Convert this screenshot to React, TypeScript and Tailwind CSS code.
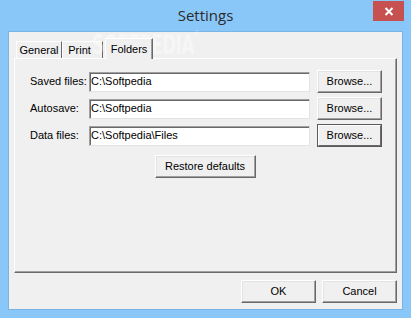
import { ReactNode } from "react";

const raised =
  "border border-t-white border-l-white border-r-[#696969] border-b-[#696969] shadow-[inset_-1px_-1px_0_#a0a0a0,inset_1px_1px_0_#e3e3e3] bg-[#f0f0f0]";

function WinButton({ children, width, isDefault }: { children: ReactNode; width: string; isDefault?: boolean }) {
  if (isDefault) {
    return (
      <div className={`h-[23px] border border-[#5a5a5a] ${width}`}>
        <div className="h-full w-full border border-t-white border-l-white border-r-[#696969] border-b-[#696969] bg-[#f0f0f0] flex items-center justify-center text-[11px] text-black">
          {children}
        </div>
      </div>
    );
  }
  return (
    <div className={`h-[23px] ${width} ${raised} flex items-center justify-center text-[11px] text-black`}>
      {children}
    </div>
  );
}

function FolderRow({ label, value, isDefault }: { label: string; value: string; isDefault?: boolean }) {
  return (
    <div className="flex h-[23px] items-center">
      <span className="w-[59px] text-[11px] text-black">{label}</span>
      <div className="flex h-[20px] w-[221px] items-center border border-t-[#a0a0a0] border-l-[#a0a0a0] border-r-[#e3e3e3] border-b-[#e3e3e3] bg-white pl-[1px] shadow-[inset_1px_1px_0_#696969]">
        <span className="text-[11px] text-black">{value}</span>
      </div>
      <div className="ml-[7px]">
        <WinButton width="w-[65px]" isDefault={isDefault}>
          Browse...
        </WinButton>
      </div>
    </div>
  );
}

export default function App() {
  return (
    <div className="relative flex h-[318px] w-[411px] flex-col bg-[#89c7f9] font-['Liberation_Sans',Arial,sans-serif]">
      <div className="relative flex h-[31px] items-center justify-center">
        <span className="font-['Open_Sans',sans-serif] text-[15px] text-[#2b2b2b]">Settings</span>
        <div className="absolute right-[7px] top-[1px] flex h-[20px] w-[31px] items-center justify-center bg-[#c75050]">
          <svg width="10" height="9" viewBox="0 0 10 9">
            <path d="M1.5 1 L8.5 8 M8.5 1 L1.5 8" stroke="white" strokeWidth="2" />
          </svg>
        </div>
      </div>

      <div className="mx-[8px] mb-[8px] flex flex-1 flex-col border border-[#7ab4e4] bg-[#f0f0f0] px-[5px] pb-[6px] pt-[6px]">
        <div className="flex h-[20px] items-end pl-[2px]">
          <div className="flex h-[17px] w-[46px] items-center justify-center border-l border-t border-r border-l-white border-t-white border-r-[#696969] text-[11px] text-black">
            General
          </div>
          <div className="flex h-[17px] w-[41px] items-center justify-center border-l border-t border-r border-l-white border-t-white border-r-[#696969] pr-[6px] text-[11px] text-black">
            Print
          </div>
          <div className="relative z-10 -mb-[1px] ml-[2px] flex h-[21px] w-[48px] items-start justify-center border-l border-t border-r border-l-white border-t-white border-r-[#696969] bg-[#f0f0f0] pt-[2px] text-[11px] text-black shadow-[inset_-1px_0_0_#a0a0a0]">
            Folders
          </div>
        </div>

        <div className="h-[215px] border border-t-white border-l-white border-r-[#696969] border-b-[#696969] pl-[15px] pt-[11px] shadow-[inset_-1px_-1px_0_#a0a0a0]">
          <div className="flex flex-col gap-[4px]">
            <FolderRow label="Saved files:" value={"C:\\Softpedia"} />
            <FolderRow label="Autosave:" value={"C:\\Softpedia"} />
            <FolderRow label="Data files:" value={"C:\\Softpedia\\Files"} isDefault />
          </div>
          <div className="mt-[8px] flex justify-center pr-[16px]">
            <WinButton width="w-[101px]">Restore defaults</WinButton>
          </div>
        </div>

        <div className="mt-[7px] flex justify-end gap-[6px]">
          <WinButton width="w-[75px]">OK</WinButton>
          <WinButton width="w-[75px]">Cancel</WinButton>
        </div>
      </div>

      <div className="pointer-events-none absolute left-[92px] top-[31px] origin-left scale-x-[0.62] font-['DejaVu_Sans',sans-serif] text-[27px] font-bold leading-none tracking-tight text-white opacity-40">
        SOFTPEDIA<span className="align-top text-[8px]">®</span>
      </div>
    </div>
  );
}
